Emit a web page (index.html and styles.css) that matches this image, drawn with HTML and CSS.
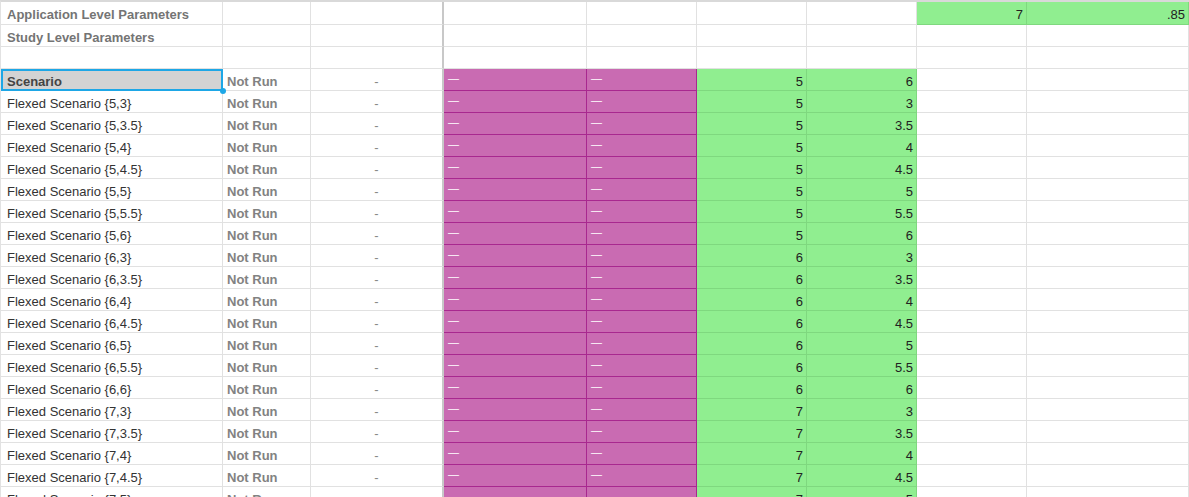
FILE: index.html
```html
<!DOCTYPE html>
<html>
<head>
<meta charset="utf-8">
<link rel="stylesheet" href="styles.css">
</head>
<body>
<div class="sheet">
  <div class="c hdr">Application Level Parameters</div><div class="c"></div><div class="c fz"></div><div class="c"></div><div class="c"></div><div class="c"></div><div class="c"></div><div class="c g num">7</div><div class="c g num">.85</div>
  <div class="c hdr">Study Level Parameters</div><div class="c"></div><div class="c fz"></div><div class="c"></div><div class="c"></div><div class="c"></div><div class="c"></div><div class="c"></div><div class="c"></div>
  <div class="c"></div><div class="c"></div><div class="c fz"></div><div class="c"></div><div class="c"></div><div class="c"></div><div class="c"></div><div class="c"></div><div class="c"></div>
  <div class="c sel">Scenario<span class="handle"></span></div><div class="c st">Not Run</div><div class="c fz dash">-</div><div class="c m">—</div><div class="c m">—</div><div class="c g num">5</div><div class="c g num">6</div><div class="c"></div><div class="c"></div>
  <div class="c name">Flexed Scenario {5,3}</div><div class="c st">Not Run</div><div class="c fz dash">-</div><div class="c m">—</div><div class="c m">—</div><div class="c g num">5</div><div class="c g num">3</div><div class="c"></div><div class="c"></div>
  <div class="c name">Flexed Scenario {5,3.5}</div><div class="c st">Not Run</div><div class="c fz dash">-</div><div class="c m">—</div><div class="c m">—</div><div class="c g num">5</div><div class="c g num">3.5</div><div class="c"></div><div class="c"></div>
  <div class="c name">Flexed Scenario {5,4}</div><div class="c st">Not Run</div><div class="c fz dash">-</div><div class="c m">—</div><div class="c m">—</div><div class="c g num">5</div><div class="c g num">4</div><div class="c"></div><div class="c"></div>
  <div class="c name">Flexed Scenario {5,4.5}</div><div class="c st">Not Run</div><div class="c fz dash">-</div><div class="c m">—</div><div class="c m">—</div><div class="c g num">5</div><div class="c g num">4.5</div><div class="c"></div><div class="c"></div>
  <div class="c name">Flexed Scenario {5,5}</div><div class="c st">Not Run</div><div class="c fz dash">-</div><div class="c m">—</div><div class="c m">—</div><div class="c g num">5</div><div class="c g num">5</div><div class="c"></div><div class="c"></div>
  <div class="c name">Flexed Scenario {5,5.5}</div><div class="c st">Not Run</div><div class="c fz dash">-</div><div class="c m">—</div><div class="c m">—</div><div class="c g num">5</div><div class="c g num">5.5</div><div class="c"></div><div class="c"></div>
  <div class="c name">Flexed Scenario {5,6}</div><div class="c st">Not Run</div><div class="c fz dash">-</div><div class="c m">—</div><div class="c m">—</div><div class="c g num">5</div><div class="c g num">6</div><div class="c"></div><div class="c"></div>
  <div class="c name">Flexed Scenario {6,3}</div><div class="c st">Not Run</div><div class="c fz dash">-</div><div class="c m">—</div><div class="c m">—</div><div class="c g num">6</div><div class="c g num">3</div><div class="c"></div><div class="c"></div>
  <div class="c name">Flexed Scenario {6,3.5}</div><div class="c st">Not Run</div><div class="c fz dash">-</div><div class="c m">—</div><div class="c m">—</div><div class="c g num">6</div><div class="c g num">3.5</div><div class="c"></div><div class="c"></div>
  <div class="c name">Flexed Scenario {6,4}</div><div class="c st">Not Run</div><div class="c fz dash">-</div><div class="c m">—</div><div class="c m">—</div><div class="c g num">6</div><div class="c g num">4</div><div class="c"></div><div class="c"></div>
  <div class="c name">Flexed Scenario {6,4.5}</div><div class="c st">Not Run</div><div class="c fz dash">-</div><div class="c m">—</div><div class="c m">—</div><div class="c g num">6</div><div class="c g num">4.5</div><div class="c"></div><div class="c"></div>
  <div class="c name">Flexed Scenario {6,5}</div><div class="c st">Not Run</div><div class="c fz dash">-</div><div class="c m">—</div><div class="c m">—</div><div class="c g num">6</div><div class="c g num">5</div><div class="c"></div><div class="c"></div>
  <div class="c name">Flexed Scenario {6,5.5}</div><div class="c st">Not Run</div><div class="c fz dash">-</div><div class="c m">—</div><div class="c m">—</div><div class="c g num">6</div><div class="c g num">5.5</div><div class="c"></div><div class="c"></div>
  <div class="c name">Flexed Scenario {6,6}</div><div class="c st">Not Run</div><div class="c fz dash">-</div><div class="c m">—</div><div class="c m">—</div><div class="c g num">6</div><div class="c g num">6</div><div class="c"></div><div class="c"></div>
  <div class="c name">Flexed Scenario {7,3}</div><div class="c st">Not Run</div><div class="c fz dash">-</div><div class="c m">—</div><div class="c m">—</div><div class="c g num">7</div><div class="c g num">3</div><div class="c"></div><div class="c"></div>
  <div class="c name">Flexed Scenario {7,3.5}</div><div class="c st">Not Run</div><div class="c fz dash">-</div><div class="c m">—</div><div class="c m">—</div><div class="c g num">7</div><div class="c g num">3.5</div><div class="c"></div><div class="c"></div>
  <div class="c name">Flexed Scenario {7,4}</div><div class="c st">Not Run</div><div class="c fz dash">-</div><div class="c m">—</div><div class="c m">—</div><div class="c g num">7</div><div class="c g num">4</div><div class="c"></div><div class="c"></div>
  <div class="c name">Flexed Scenario {7,4.5}</div><div class="c st">Not Run</div><div class="c fz dash">-</div><div class="c m">—</div><div class="c m">—</div><div class="c g num">7</div><div class="c g num">4.5</div><div class="c"></div><div class="c"></div>
  <div class="c name">Flexed Scenario {7,5}</div><div class="c st">Not Run</div><div class="c fz dash">-</div><div class="c m">—</div><div class="c m">—</div><div class="c g num">7</div><div class="c g num">5</div><div class="c"></div><div class="c"></div>
</div>
</body>
</html>
```

FILE: styles.css
```css
html, body {
  margin: 0;
  padding: 0;
  background: #fff;
  overflow: hidden;
  height: 497px;
}
.sheet {
  display: grid;
  grid-template-columns: 222px 88px 133px 143px 110px 110px 110px 110px 1fr;
  grid-auto-rows: 22px;
  grid-template-rows: 23px;
  border-top: 2px solid #d9d9d9;
  border-left: 1px solid #e2e2e2;
  font-family: "Liberation Sans", Arial, sans-serif;
  font-size: 13px;
  color: #333;
}
.c {
  box-sizing: border-box;
  border-right: 1px solid #e1e1e1;
  border-bottom: 1px solid #e1e1e1;
  padding: 3px 5px 0 6px;
  line-height: 19px;
  white-space: nowrap;
  overflow: hidden;
  position: relative;
}
.fz {
  border-right: 2px solid #c8c8c8;
}
.hdr {
  font-weight: 700;
  color: #747474;
}
.name {
  color: #333;
}
.st {
  color: #828282;
  font-weight: 700;
  padding-left: 4px;
}
.dash {
  text-align: center;
  color: #888;
  padding-left: 0;
  padding-right: 0;
}
.m {
  background: #c96bb2;
  border-right-color: #a8288f;
  border-bottom-color: #a8288f;
  color: #fff;
  font-size: 11px;
  padding: 0 0 0 4px;
  line-height: 19px;
}
.g {
  background: #90ee90;
  border-right-color: #7fd87f;
  border-bottom-color: #7fd87f;
}
.num {
  text-align: right;
  color: #222;
  padding-right: 3px;
}
.sel {
  background: #d3d3d3;
  font-weight: 700;
  color: #444;
  outline: 2px solid #1ea7e6;
  outline-offset: -2px;
  overflow: visible;
  z-index: 2;
}
.handle {
  position: absolute;
  right: -4px;
  bottom: -4px;
  width: 6px;
  height: 6px;
  border-radius: 50%;
  background: #1ea7e6;
}
```
